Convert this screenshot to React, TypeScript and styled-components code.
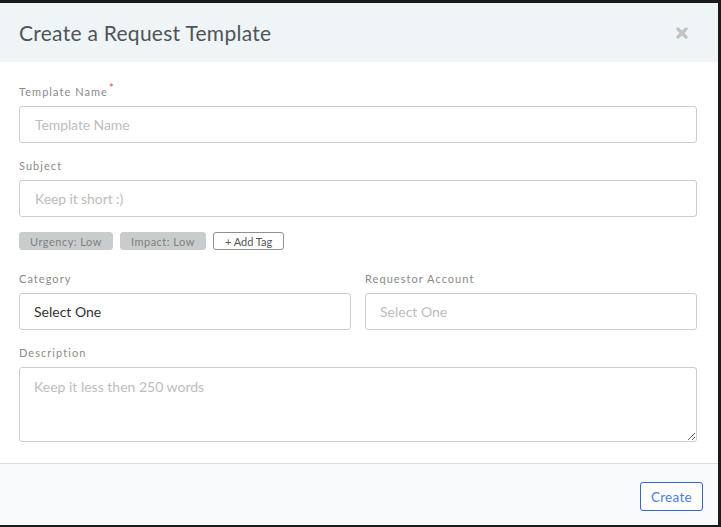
import styled, { createGlobalStyle } from "styled-components";

const GlobalStyle = createGlobalStyle`
  html, body {
    margin: 0;
    padding: 0;
    background: #1b1b1b;
  }
  body {
    font-family: Lato, "Open Sans", sans-serif;
  }
  #root {
    padding-top: 3px;
  }
`;

const Modal = styled.div`
  width: 718px;
  height: 522px;
  background: #ffffff;
  display: flex;
  flex-direction: column;
`;

const ModalHeader = styled.div`
  height: 59px;
  flex-shrink: 0;
  background: #eff4f7;
  display: flex;
  align-items: center;
  justify-content: space-between;
  padding: 0 30px 0 19px;
`;

const Title = styled.h2`
  margin: 0;
  font-size: 21px;
  font-weight: 400;
  color: #4f5457;
  letter-spacing: 0.27px;
`;

const CloseButton = styled.button`
  background: none;
  border: none;
  padding: 0;
  width: 12px;
  height: 12px;
  display: flex;
  cursor: pointer;
`;

const ModalBody = styled.div`
  flex: 1;
  padding: 23px 21px 0 19px;
`;

const Field = styled.div<{ $gap?: number }>`
  display: flex;
  flex-direction: column;
  margin-bottom: ${(p) => p.$gap ?? 16}px;
`;

const Label = styled.label`
  font-size: 11px;
  line-height: 14px;
  color: #8a8a8a;
  letter-spacing: 1.05px;
  margin-bottom: 7px;
`;

const Required = styled.span`
  color: #e0413a;
  font-size: 11px;
  line-height: 0;
  margin-left: 1px;
  position: relative;
  top: -4px;
`;

const Input = styled.input`
  box-sizing: border-box;
  height: 37px;
  width: 100%;
  border: 1px solid #cdcdcd;
  border-radius: 3px;
  padding: 0 15px;
  font-family: Lato, sans-serif;
  font-size: 14px;
  color: #333;
  outline: none;

  &::placeholder {
    color: #bdbdbd;
    letter-spacing: -0.1px;
  }
`;

const Select = styled.div<{ $empty?: boolean }>`
  box-sizing: border-box;
  height: 37px;
  border: 1px solid #cdcdcd;
  border-radius: 3px;
  padding: 0 14px;
  display: flex;
  align-items: center;
  font-size: 14px;
  color: ${(p) => (p.$empty ? "#bdbdbd" : "#333333")};
`;

const TextArea = styled.textarea`
  box-sizing: border-box;
  height: 75px;
  width: 100%;
  border: 1px solid #cdcdcd;
  border-radius: 3px;
  padding: 10px 14px;
  font-family: Lato, sans-serif;
  font-size: 14px;
  resize: vertical;
  outline: none;

  &::placeholder {
    color: #bdbdbd;
  }
`;

const TagRow = styled.div`
  display: flex;
  gap: 7px;
  margin-bottom: 22px;
`;

const Tag = styled.span<{ $outline?: boolean }>`
  box-sizing: border-box;
  height: 18px;
  padding: 0 ${(p) => (p.$outline ? 11 : 10)}px;
  border-radius: 3px;
  display: inline-flex;
  align-items: center;
  font-size: 11px;
  letter-spacing: ${(p) => (p.$outline ? "0" : "0.5px")};
  background: ${(p) => (p.$outline ? "#ffffff" : "#c9cccd")};
  border: 1px solid ${(p) => (p.$outline ? "#8f8f8f" : "#c9cccd")};
  color: ${(p) => (p.$outline ? "#555555" : "#7e8082")};
`;

const Columns = styled.div`
  display: grid;
  grid-template-columns: 1fr 1fr;
  column-gap: 14px;
`;

const ModalFooter = styled.div`
  height: 62px;
  flex-shrink: 0;
  box-sizing: border-box;
  border-top: 1px solid #dcdcdc;
  background: #f7f9fb;
  display: flex;
  justify-content: flex-end;
  align-items: flex-start;
  padding: 18px 15px 0;
`;

const PrimaryButton = styled.button`
  height: 29px;
  padding: 0 10px;
  border: 1px solid #2f66d8;
  border-radius: 3px;
  background: #ffffff;
  color: #4a7ee0;
  font-family: Lato, sans-serif;
  font-size: 13.5px;
  letter-spacing: 0.3px;
  cursor: pointer;
`;

const CloseIcon = () => (
  <svg width="12" height="12" viewBox="0 0 12 12">
    <path
      d="M2 2 L10 10 M10 2 L2 10"
      stroke="#c2c2c2"
      strokeWidth="3.2"
      strokeLinecap="round"
    />
  </svg>
);

export default function App() {
  return (
    <>
      <GlobalStyle />
      <Modal>
        <ModalHeader>
          <Title>Create a Request Template</Title>
          <CloseButton aria-label="Close">
            <CloseIcon />
          </CloseButton>
        </ModalHeader>

        <ModalBody>
          <Field>
            <Label>
              Template Name<Required>*</Required>
            </Label>
            <Input placeholder="Template Name" />
          </Field>

          <Field $gap={15}>
            <Label>Subject</Label>
            <Input placeholder="Keep it short :)" />
          </Field>

          <TagRow>
            <Tag>Urgency: Low</Tag>
            <Tag>Impact: Low</Tag>
            <Tag $outline>+ Add Tag</Tag>
          </TagRow>

          <Columns>
            <Field>
              <Label>Category</Label>
              <Select>Select One</Select>
            </Field>
            <Field>
              <Label>Requestor Account</Label>
              <Select $empty>Select One</Select>
            </Field>
          </Columns>

          <Field $gap={0}>
            <Label>Description</Label>
            <TextArea placeholder="Keep it less then 250 words" />
          </Field>
        </ModalBody>

        <ModalFooter>
          <PrimaryButton>Create</PrimaryButton>
        </ModalFooter>
      </Modal>
    </>
  );
}
